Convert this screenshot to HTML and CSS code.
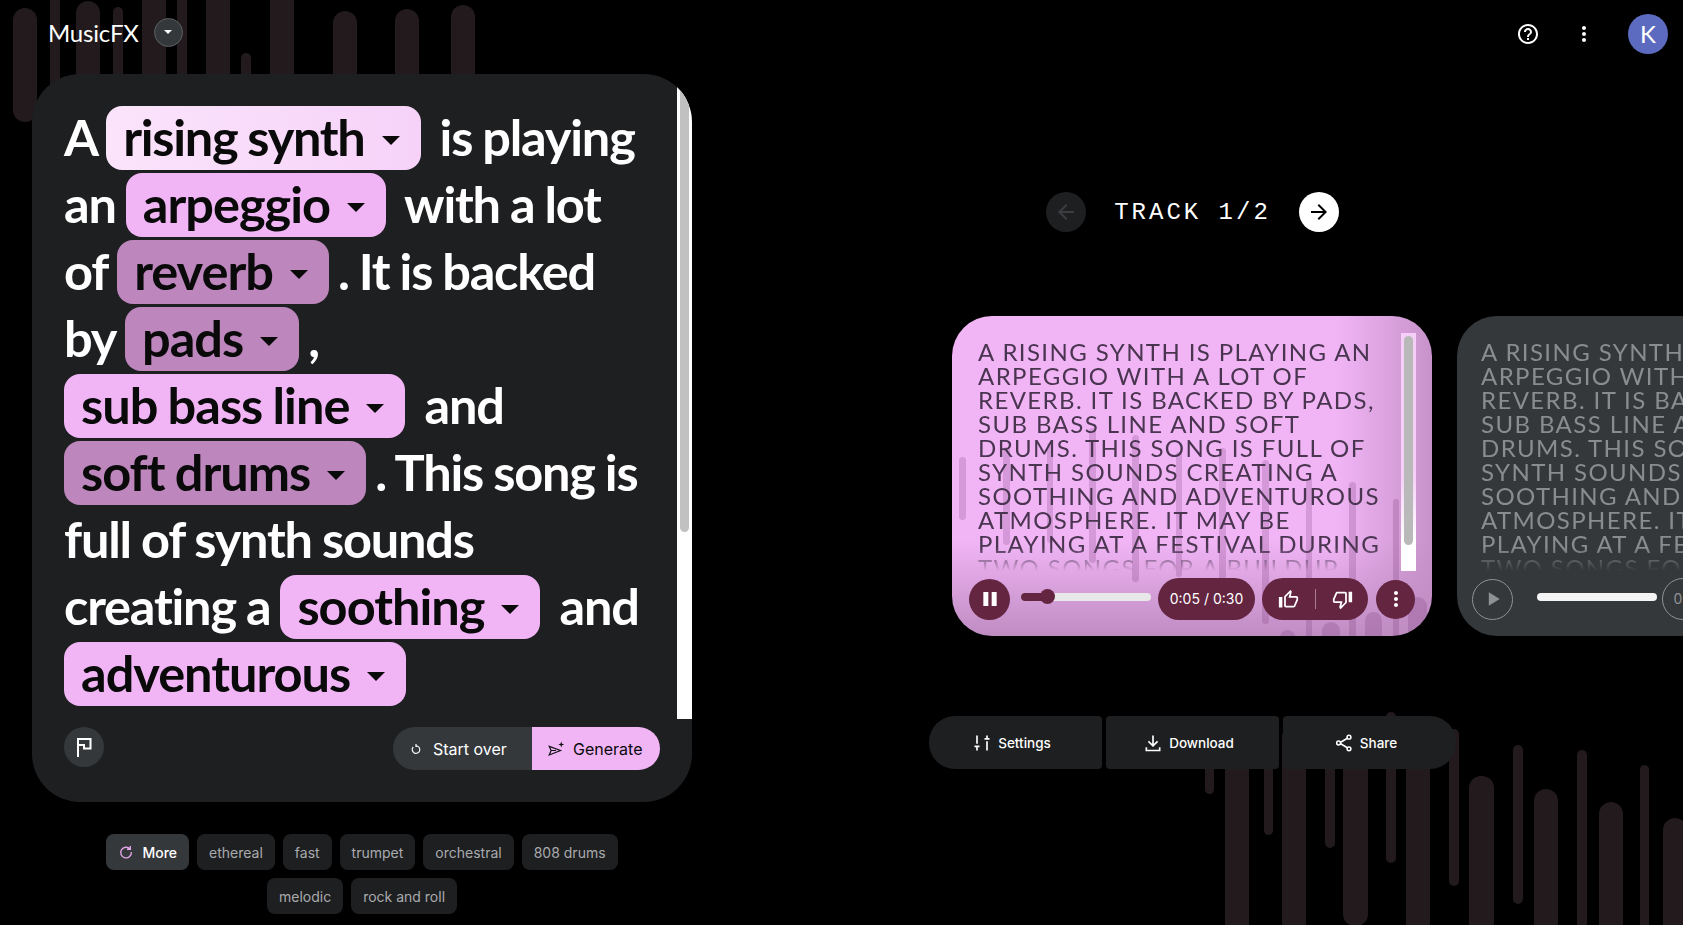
FILE: index.html
```html
<!DOCTYPE html>
<html lang="en">
<head>
    <meta charset="UTF-8">
    <title>MusicFX</title>
    <link rel="stylesheet" href="styles.css">
</head>
<body>
    <!-- equalizer bars behind everything -->
    <svg class="backdrop" viewBox="0 0 1683 925" aria-hidden="true">
        <rect x="13" y="8" width="24" height="114" rx="12"/>
        <rect x="50" y="-20" width="10" height="110" rx="5"/>
        <rect x="76" y="1" width="24" height="100" rx="12"/>
        <rect x="113" y="7" width="10" height="80" rx="5"/>
        <rect x="142" y="-20" width="24" height="110" rx="12"/>
        <rect x="177" y="-20" width="10" height="110" rx="5"/>
        <rect x="206" y="-20" width="24" height="110" rx="12"/>
        <rect x="241" y="53" width="10" height="40" rx="5"/>
        <rect x="270" y="-20" width="24" height="110" rx="12"/>
        <rect x="333" y="11" width="24" height="80" rx="12"/>
        <rect x="395" y="9" width="24" height="80" rx="12"/>
        <rect x="451" y="5" width="24" height="80" rx="12"/>

        <rect x="1205" y="725" width="9" height="69" rx="4.5"/>
        <rect x="1225" y="725" width="24" height="235" rx="12"/>
        <rect x="1264" y="725" width="9" height="110" rx="4.5"/>
        <rect x="1282" y="725" width="24" height="235" rx="12"/>
        <rect x="1325" y="725" width="10" height="123" rx="5"/>
        <rect x="1343" y="725" width="25" height="201" rx="12"/>
        <rect x="1386" y="712" width="10" height="151" rx="5"/>
        <rect x="1406" y="725" width="24" height="235" rx="12"/>
        <rect x="1449" y="729" width="10" height="157" rx="5"/>
        <rect x="1469" y="776" width="25" height="190" rx="12"/>
        <rect x="1513" y="745" width="10" height="159" rx="5"/>
        <rect x="1534" y="789" width="24" height="170" rx="12"/>
        <rect x="1577" y="750" width="10" height="200" rx="5"/>
        <rect x="1599" y="802" width="24" height="160" rx="12"/>
        <rect x="1640" y="765" width="9" height="190" rx="4.5"/>
        <rect x="1663" y="818" width="24" height="140" rx="12"/>
    </svg>

    <header class="topbar">
        <div class="brand">
            <span class="brand-name">MusicFX</span>
            <button class="brand-menu"><span class="caret caret-small"></span></button>
        </div>
        <div class="topbar-actions">
            <svg class="icon-help" viewBox="0 0 24 24"><path d="M11 18h2v-2h-2v2zm1-16C6.48 2 2 6.48 2 12s4.48 10 10 10 10-4.48 10-10S17.52 2 12 2zm0 18c-4.41 0-8-3.59-8-8s3.59-8 8-8 8 3.59 8 8-3.59 8-8 8zm0-14c-2.21 0-4 1.79-4 4h2c0-1.1.9-2 2-2s2 .9 2 2c0 2-3 1.75-3 5h2c0-2.25 3-2.5 3-5 0-2.21-1.79-4-4-4z"/></svg>
            <svg class="icon-kebab" viewBox="0 0 24 24"><path d="M12 8c1.1 0 2-.9 2-2s-.9-2-2-2-2 .9-2 2 .9 2 2 2zm0 2c-1.1 0-2 .9-2 2s.9 2 2 2 2-.9 2-2-.9-2-2-2zm0 6c-1.1 0-2 .9-2 2s.9 2 2 2 2-.9 2-2-.9-2-2-2z"/></svg>
            <div class="avatar">K</div>
        </div>
    </header>

    <main class="layout">
        <section class="left-col">
            <div class="prompt-card">
                <div class="prompt-scroll">
                    <p class="prompt">A <span class="chip chip-light">rising synth<i class="caret"></i></span> is playing an <span class="chip">arpeggio<i class="caret"></i></span> with a lot of <span class="chip chip-dark">reverb<i class="caret"></i></span>. It is backed by <span class="chip chip-dark">pads<i class="caret"></i></span>, <span class="chip">sub bass line<i class="caret"></i></span> and <span class="chip chip-dark">soft drums<i class="caret"></i></span>. This song is full of synth sounds creating a <span class="chip">soothing<i class="caret"></i></span> and <span class="chip">adventurous<i class="caret"></i></span></p>
                    <div class="scrollbar">
                        <div class="scrollbar-thumb"></div>
                    </div>
                </div>
                <div class="prompt-footer">
                    <button class="flag-btn">
                        <svg viewBox="0 0 24 24"><path d="M6 22V4h12.500v9.500H12v-3.500H6" fill="none" stroke="#fff" stroke-width="2"/></svg>
                    </button>
                    <div class="prompt-actions">
                        <button class="start-btn">
                            <svg viewBox="0 0 24 24"><path d="M12 6.500a6.500 6.500 0 1 1-4.800 2.100M12 3.500v5" fill="none" stroke="#fff" stroke-width="2"/></svg>
                            Start over
                        </button>
                        <button class="generate-btn">
                            <svg viewBox="0 0 24 24"><path d="M3 8.500l15 5.500-15 6 2.500-6zM5.500 14H12" fill="none" stroke="#111" stroke-width="1.600"/><path d="M19 2l1 3 3 1-3 1-1 3-1-3-3-1 3-1z" fill="#111"/></svg>
                            Generate
                        </button>
                    </div>
                </div>
            </div>

            <div class="suggestions">
                <button class="suggest suggest-more">
                    <svg viewBox="0 0 24 24"><path d="M18 7.500A8 8 0 1 0 20 12M18.500 3v5h-5" fill="none" stroke="#e5a6ea" stroke-width="2"/></svg>
                    More
                </button>
                <button class="suggest">ethereal</button>
                <button class="suggest">fast</button>
                <button class="suggest">trumpet</button>
                <button class="suggest">orchestral</button>
                <button class="suggest">808 drums</button>
                <button class="suggest">melodic</button>
                <button class="suggest">rock and roll</button>
            </div>
        </section>

        <section class="right-col">
            <div class="track-nav">
                <button class="nav-btn">
                    <svg viewBox="0 0 24 24"><path d="M20 11H7.830l5.590-5.590L12 4l-8 8 8 8 1.410-1.410L7.830 13H20v-2z"/></svg>
                </button>
                <span class="track-label">TRACK 1/2</span>
                <button class="nav-btn nav-btn-on">
                    <svg viewBox="0 0 24 24"><path d="M12 4l-1.410 1.410L16.170 11H4v2h12.170l-5.580 5.590L12 20l8-8z"/></svg>
                </button>
            </div>

            <div class="tracks">
                <article class="track track-active">
                    <svg class="track-bars" viewBox="0 0 480 320" aria-hidden="true">
                        <rect x="7" y="141" width="7" height="63" rx="3.500"/>
                        <rect x="51" y="131" width="7" height="98" rx="3.500"/>
                        <rect x="95" y="127" width="6" height="100" rx="3"/>
                        <rect x="137" y="112" width="7" height="135" rx="3.500"/>
                        <rect x="180" y="119" width="7" height="147" rx="3.500"/>
                        <rect x="224" y="136" width="6" height="125" rx="3"/>
                        <rect x="267" y="132" width="7" height="132" rx="3.500"/>
                        <rect x="310" y="144" width="7" height="164" rx="3.500"/>
                        <rect x="354" y="162" width="6" height="170" rx="3"/>
                        <rect x="397" y="166" width="7" height="170" rx="3.500"/>
                        <rect x="441" y="183" width="6" height="150" rx="3"/>
                        <rect x="328" y="314" width="15" height="30" rx="7.500"/>
                        <rect x="370" y="306" width="18" height="40" rx="9"/>
                        <rect x="413" y="296" width="17" height="50" rx="8.500"/>
                        <rect x="456" y="281" width="19" height="60" rx="9.500"/>
                    </svg>
                    <div class="track-body">
                        <div class="lyric">A rising synth is playing an arpeggio with a lot of reverb. It is backed by pads, sub bass line and soft drums. This song is full of synth sounds creating a soothing and adventurous atmosphere. It may be playing at a festival during two songs for a buildup</div>
                        <div class="track-scroll"><div class="track-thumb"></div></div>
                    </div>
                    <div class="controls">
                        <button class="round round-fill">
                            <svg viewBox="0 0 24 24"><path d="M4 3.500h6v17H4zM14 3.500h6v17h-6z" fill="#fff"/></svg>
                        </button>
                        <div class="slider">
                            <div class="slider-fill"></div>
                            <div class="slider-knob"></div>
                        </div>
                        <div class="time">0:05 / 0:30</div>
                        <div class="rate">
                            <svg viewBox="0 0 24 24"><path d="M9 21h9c.83 0 1.540-.5 1.840-1.220l3.020-7.050c.09-.23.14-.47.14-.73v-2c0-1.100-.9-2-2-2h-6.310l.95-4.570.03-.32c0-.41-.17-.79-.44-1.060L14.170 1 7.580 7.590C7.220 7.950 7 8.450 7 9v10c0 1.100.9 2 2 2zM9 9l4.340-4.340L12 10h9v2l-3 7H9V9zM1 9h4v12H1z"/></svg>
                            <span class="rate-line"></span>
                            <svg viewBox="0 0 24 24"><path d="M15 3H6c-.83 0-1.540.5-1.840 1.220l-3.020 7.050c-.09.23-.14.47-.14.73v2c0 1.100.9 2 2 2h6.310l-.95 4.570-.03.32c0 .41.17.79.44 1.060L9.830 23l6.590-6.590c.36-.36.58-.86.58-1.410V5c0-1.100-.9-2-2-2zm0 12l-4.340 4.340L12 14H3v-2l3-7h9v10zm4-12h4v12h-4z"/></svg>
                        </div>
                        <button class="round round-fill round-small">
                            <svg viewBox="0 0 24 24"><path d="M12 8c1.100 0 2-.9 2-2s-.9-2-2-2-2 .9-2 2 .9 2 2 2zm0 2c-1.100 0-2 .9-2 2s.9 2 2 2 2-.9 2-2-.9-2-2-2zm0 6c-1.100 0-2 .9-2 2s.9 2 2 2 2-.9 2-2-.9-2-2-2z" fill="#fff"/></svg>
                        </button>
                    </div>
                </article>

                <article class="track track-idle">
                    <div class="track-body">
                        <div class="lyric">A rising synth is playing an arpeggio with a lot of reverb. It is backed by pads, sub bass line and soft drums. This song is full of synth sounds creating a soothing and adventurous atmosphere. It may be playing at a festival during two songs for a buildup</div>
                    </div>
                    <div class="controls">
                        <button class="round round-line">
                            <svg viewBox="0 0 24 24"><path d="M7 4l13 8-13 8z" fill="#8f9295"/></svg>
                        </button>
                        <div class="slider slider-idle"></div>
                        <div class="time time-line">0:00 / 0:30</div>
                    </div>
                </article>
            </div>

            <div class="actions">
                <button class="action action-first">
                    <svg viewBox="0 0 24 24"><path d="M6 3v10M3 16h6M6 16v5M18 3v4M15 7h6M18 10v11" fill="none" stroke="#fff" stroke-width="2"/></svg>
                    Settings
                </button>
                <button class="action">
                    <svg viewBox="0 0 24 24"><path d="M12 3v12M6.500 10l5.500 5.500 5.500-5.500M4 17v4h16v-4" fill="none" stroke="#fff" stroke-width="2"/></svg>
                    Download
                </button>
                <button class="action action-last">
                    <svg viewBox="0 0 24 24"><path d="M17.500 5.500L6.500 12l11 6.500" fill="none" stroke="#fff" stroke-width="2"/><circle cx="18" cy="5" r="2.300" fill="#1e1f21" stroke="#fff" stroke-width="1.800"/><circle cx="5.500" cy="12" r="2.300" fill="#1e1f21" stroke="#fff" stroke-width="1.800"/><circle cx="18" cy="19" r="2.300" fill="#1e1f21" stroke="#fff" stroke-width="1.800"/></svg>
                    Share
                </button>
            </div>
        </section>
    </main>
</body>
</html>
```

FILE: styles.css
```css
html, body {
    height: 100%;
    margin: 0;
}

body {
    position: relative;
    height: 925px;
    overflow: hidden;
    background: #000;
    color: #fff;
    font-family: "Inter", "Liberation Sans", sans-serif;
}

button {
    border: 0;
    padding: 0;
    color: inherit;
    font: inherit;
    cursor: pointer;
}

.backdrop {
    position: absolute;
    top: 0;
    left: 0;
    width: 1683px;
    height: 925px;
    fill: #221a1d;
}

/* top bar */
.topbar {
    position: relative;
    display: flex;
    justify-content: space-between;
    align-items: center;
    height: 74px;
    padding: 0 15px 6px 48px;
    box-sizing: border-box;
}

.brand {
    display: flex;
    align-items: center;
    gap: 15px;
    margin-bottom: 4px;
}

.brand-name {
    font-family: "Lato", sans-serif;
    font-size: 24px;
    letter-spacing: -0.2px;
}

.brand-menu {
    display: flex;
    justify-content: center;
    align-items: center;
    width: 29px;
    height: 29px;
    border: 1px solid #5c5f63;
    border-radius: 50%;
    background: #35383b;
}

.topbar-actions {
    display: flex;
    align-items: center;
}

.topbar-actions svg {
    fill: #fff;
}

.icon-help {
    width: 24px;
    height: 24px;
}

.icon-kebab {
    width: 24px;
    height: 24px;
    margin-left: 32px;
}

.avatar {
    width: 40px;
    height: 40px;
    margin-left: 32px;
    border-radius: 50%;
    background: #5c6bc0;
    font-family: "Lato", sans-serif;
    font-size: 24px;
    line-height: 40px;
    text-align: center;
}

.layout {
    position: relative;
    display: flex;
}

/* left column */
.left-col {
    flex: 0 0 660px;
    margin-left: 32px;
}

.prompt-card {
    height: 728px;
    border-radius: 48px;
    overflow: hidden;
    background: #1e1f21;
}

.prompt-scroll {
    display: flex;
    height: 645px;
}

.prompt {
    flex: 1;
    margin: 0;
    padding: 29px 28px 0 32px;
    font-family: "Lato", sans-serif;
    font-size: 50.5px;
    font-weight: 700;
    line-height: 67px;
    letter-spacing: -1.2px;
    word-spacing: -1px;
}

.chip {
    display: inline-block;
    height: 61px;
    margin-right: 9px;
    padding: 0 21px 3px 17px;
    border-radius: 16px;
    background: #f1b5f6;
    color: #0a0a0a;
    line-height: 61px;
    letter-spacing: -1px;
}

.chip-light {
    background: linear-gradient(90deg, #fbe4fb, #f6d2f9);
    letter-spacing: -1.3px;
}

.chip-dark {
    background: #bd86bd;
}

.caret {
    display: inline-block;
    width: 0;
    height: 0;
    margin-left: 17px;
    border-top: 9px solid #0a0a0a;
    border-right: 9px solid transparent;
    border-left: 9px solid transparent;
    vertical-align: 11px;
}

.caret-small {
    margin: 0;
    border-top: 4px solid #fff;
    border-right: 4px solid transparent;
    border-left: 4px solid transparent;
    vertical-align: middle;
}

.scrollbar {
    flex: 0 0 15px;
    background: #fff;
}

.scrollbar-thumb {
    height: 458px;
    margin: 0 3px 0 3px;
    border-radius: 0 0 5px 5px;
    background: #c1c1c1;
}

.prompt-footer {
    display: flex;
    justify-content: space-between;
    align-items: flex-start;
    padding: 8px 32px 0;
}

.flag-btn {
    display: flex;
    justify-content: center;
    align-items: center;
    width: 40px;
    height: 40px;
    border-radius: 50%;
    background: #35383b;
}

.flag-btn svg {
    width: 24px;
    height: 24px;
}

.prompt-actions {
    display: flex;
    height: 43px;
    border-radius: 22px;
    overflow: hidden;
    font-size: 16px;
}

.start-btn,
.generate-btn {
    display: flex;
    align-items: center;
}

.start-btn {
    width: 139px;
    padding-left: 16px;
    gap: 10px;
    background: #35383b;
}

.start-btn svg {
    width: 14px;
    height: 14px;
}

.generate-btn {
    width: 128px;
    padding-left: 15px;
    gap: 8px;
    background: #f1b5f6;
    color: #0a0a0a;
}

.generate-btn svg {
    width: 18px;
    height: 18px;
}

.suggestions {
    display: flex;
    flex-wrap: wrap;
    justify-content: center;
    gap: 8px;
    width: 530px;
    margin: 32px auto 0;
}

.suggest {
    display: flex;
    align-items: center;
    height: 36px;
    padding: 0 12px;
    border-radius: 8px;
    background: #1e1f21;
    color: #a9abae;
    font-size: 14px;
}

.suggest-more {
    gap: 8px;
    background: #35383b;
    color: #fff;
    font-weight: 500;
}

.suggest-more svg {
    width: 16px;
    height: 16px;
}

/* right column */
.right-col {
    display: flex;
    flex: 1;
    flex-direction: column;
    align-items: center;
    min-width: 0;
    margin-left: 10px;
    padding-top: 118px;
}

.track-nav {
    display: flex;
    align-items: center;
    gap: 28px;
    height: 40px;
}

.nav-btn {
    display: flex;
    justify-content: center;
    align-items: center;
    width: 40px;
    height: 40px;
    border-radius: 50%;
    background: #1e1f21;
    fill: #3c3d40;
}

.nav-btn svg {
    width: 24px;
    height: 24px;
}

.nav-btn-on {
    background: #fff;
    fill: #000;
}

.track-label {
    font-family: "Liberation Mono", monospace;
    font-size: 24px;
    letter-spacing: 3px;
}

.tracks {
    display: flex;
    align-self: flex-start;
    gap: 25px;
    margin: 84px 0 0 250px;
}

.track {
    position: relative;
    flex: 0 0 480px;
    height: 320px;
    border-radius: 40px;
    overflow: hidden;
}

.track-active {
    background:
        linear-gradient(180deg, rgba(190, 134, 190, 0) 70%, #bf8cc2 100%),
        linear-gradient(90deg, rgba(190, 134, 190, 0) 80%, #c792ca 100%),
        #f1b5f6;
    color: #4a3550;
}

.track-idle {
    background: #35383b;
    color: #8a8d90;
}

.track-bars {
    position: absolute;
    top: 0;
    left: 0;
    width: 480px;
    height: 320px;
    fill: rgba(115, 50, 115, 0.22);
}

.track-body {
    position: relative;
    display: flex;
    height: 238px;
    padding: 17px 0 0 26px;
}

.track-idle .track-body {
    padding-left: 24px;
}

.lyric {
    flex: 0 0 405px;
    height: 231px;
    margin-top: 7px;
    margin-right: 18px;
    font-family: "Lato", sans-serif;
    font-size: 24px;
    line-height: 24px;
    letter-spacing: 1.4px;
    text-transform: uppercase;
    -webkit-mask-image: linear-gradient(180deg, #000 90%, transparent 100%);
    mask-image: linear-gradient(180deg, #000 90%, transparent 100%);
}

.track-scroll {
    flex: 0 0 15px;
    height: 238px;
    background: linear-gradient(180deg, #f5cff7 60%, #fff 88%);
}

.track-thumb {
    height: 209px;
    margin: 3px 3px 0;
    border-radius: 5px;
    background: #b9b9b9;
}

.controls {
    position: relative;
    display: flex;
    align-items: center;
    height: 42px;
    margin-top: 7px;
    padding-left: 17px;
}

.track-idle .controls {
    padding-left: 15px;
}

.round {
    display: flex;
    flex: none;
    justify-content: center;
    align-items: center;
    width: 41px;
    height: 41px;
    border-radius: 50%;
    background: transparent;
}

.round svg {
    width: 20px;
    height: 20px;
}

.round-fill {
    background: #632540;
}

.round-small {
    width: 39px;
    height: 39px;
    margin-left: 8px;
}

.round-small svg {
    width: 24px;
    height: 24px;
}

.round-line {
    border: 1px solid #8f9295;
    box-sizing: border-box;
}

.slider {
    position: relative;
    flex: none;
    width: 130px;
    height: 8px;
    margin: -4px 0 0 11px;
    border-radius: 4px;
    background: #e8e8e8;
}

.slider-fill {
    width: 26px;
    height: 8px;
    border-radius: 4px 0 0 4px;
    background: #632540;
}

.slider-knob {
    position: absolute;
    top: -4px;
    left: 19px;
    width: 15px;
    height: 15px;
    border-radius: 50%;
    background: #632540;
}

.slider-idle {
    width: 120px;
    margin-left: 24px;
    background: #f4f4f4;
}

.time {
    flex: none;
    width: 97px;
    height: 42px;
    margin-left: 7px;
    border-radius: 21px;
    background: #632540;
    color: #fff;
    font-size: 14px;
    line-height: 42px;
    text-align: center;
}

.time-line {
    box-sizing: border-box;
    margin-left: 5px;
    border: 1px solid #8f9295;
    background: transparent;
    color: #8f9295;
    line-height: 40px;
}

.rate {
    display: flex;
    flex: none;
    justify-content: center;
    align-items: center;
    gap: 16px;
    width: 106px;
    height: 42px;
    margin-left: 7px;
    border-radius: 21px;
    background: #632540;
    fill: #fff;
}

.rate svg {
    width: 21px;
    height: 21px;
}

.rate-line {
    width: 1px;
    height: 20px;
    background: #a97d92;
}

.actions {
    position: relative;
    display: flex;
    gap: 4px;
    margin-top: 80px;
}

.action {
    display: flex;
    justify-content: center;
    align-items: center;
    gap: 6px;
    box-sizing: border-box;
    width: 173px;
    height: 53px;
    padding-right: 8px;
    border-radius: 4px;
    background: #1e1f21;
    font-size: 13.5px;
    font-weight: 500;
}

.action svg {
    width: 20px;
    height: 20px;
}

.action-first {
    border-radius: 26px 4px 4px 26px;
}

.action-last {
    border-radius: 4px 26px 26px 4px;
}
```
